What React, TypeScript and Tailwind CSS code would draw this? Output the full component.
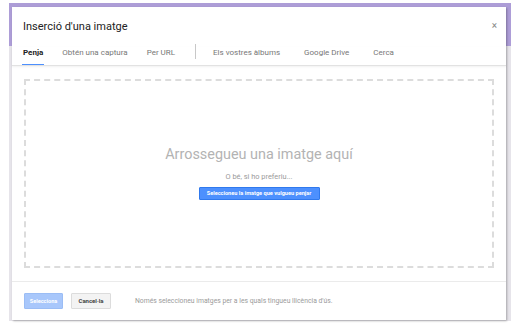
export default function App() {
  const tabs = [
    { label: "Penja", active: true, ml: "ml-[11px]" },
    { label: "Obtén una captura", ml: "ml-[19px]" },
    { label: "Per URL", ml: "ml-[19px]" },
  ];
  const tabs2 = [
    { label: "Els vostres àlbums", ml: "ml-[17px]" },
    { label: "Google Drive", ml: "ml-[24px]" },
    { label: "Cerca", ml: "ml-[24px]" },
  ];

  return (
    <div
      className="w-[531px] h-[333px] bg-white overflow-hidden"
      style={{ fontFamily: "Roboto, 'Liberation Sans', Arial, sans-serif" }}
    >
      {/* backdrop of the page behind the dialog */}
      <div className="ml-[9px] mt-[3px] w-[502px] h-[318px] pl-[3px] pt-[4px] bg-[linear-gradient(to_bottom,#ad9dd7_43px,#e6e4ea_43px)]">
        <div className="w-[494px] h-[313px] bg-white flex flex-col shadow-[1px_1px_2px_rgba(0,0,0,0.28)]">
          {/* header */}
          <div className="flex items-start justify-between pt-[13px] pl-[11px] pr-[9px]">
            <h1 className="text-[11px] leading-[13px] text-[#222] font-normal">
              Inserció d'una imatge
            </h1>
            <span className="text-[10px] leading-[10px] text-[#888] mt-[1px]">×</span>
          </div>

          {/* tabs */}
          <div className="mt-[14px] h-[19px] flex items-start border-b border-[#e2e2e2] shadow-[0_1px_2px_rgba(0,0,0,0.06)]">
            {tabs.map((t) => (
              <div key={t.label} className={`${t.ml} h-full flex flex-col justify-between`}>
                <span
                  className={`text-[8px] leading-[10px] pt-[1px] ${
                    t.active ? "font-bold text-[#222]" : "text-[#777]"
                  }`}
                >
                  {t.label}
                </span>
                {t.active && <div className="h-[1.5px] -mx-px bg-[#4d90fe]" />}
              </div>
            ))}
            <div className="ml-[20px] mt-[-3px] w-px h-[15px] bg-[#c8c8c8]" />
            {tabs2.map((t) => (
              <span key={t.label} className={`${t.ml} text-[8px] leading-[10px] pt-[1px] text-[#777]`}>
                {t.label}
              </span>
            ))}
          </div>

          {/* drop zone */}
          <div className="flex-1 px-[12px] py-[13px]">
            <div className="h-full border-2 border-dashed border-[#dcdcdc] flex flex-col items-center pt-[65px]">
              <div className="text-[14.4px] leading-[17px] text-[#b3b3b3]">
                Arrossegueu una imatge aquí
              </div>
              <div className="mt-[9px] text-[7.4px] leading-[9px] text-[#9a9a9a]">
                O bé, si ho preferiu...
              </div>
              <button className="mt-[6px] w-[121px] h-[13px] bg-[#4d90fe] border border-[#3079ed] text-white font-bold text-[5.6px] leading-[11px] rounded-[1px]">
                Seleccioneu la imatge que vulgueu penjar
              </button>
            </div>
          </div>

          {/* footer */}
          <div className="h-[39px] border-t border-[#ebebeb] flex items-start pt-[11px] pl-[12px]">
            <button className="w-[39px] h-[16px] bg-[#a8c7fb] border border-[#9bbdf5] text-white font-bold text-[5.6px] leading-[14px] rounded-[1px]">
              Selecciona
            </button>
            <button className="ml-[8px] w-[40px] h-[16px] bg-[#f3f3f3] border border-[#dcdcdc] text-[#444] font-bold text-[6px] leading-[14px] rounded-[1px]">
              Cancel·la
            </button>
            <span className="ml-[24px] text-[6.8px] leading-[16px] text-[#9a9a9a]">
              Només seleccioneu imatges per a les quals tingueu llicència d'ús.
            </span>
          </div>
        </div>
      </div>
    </div>
  );
}
